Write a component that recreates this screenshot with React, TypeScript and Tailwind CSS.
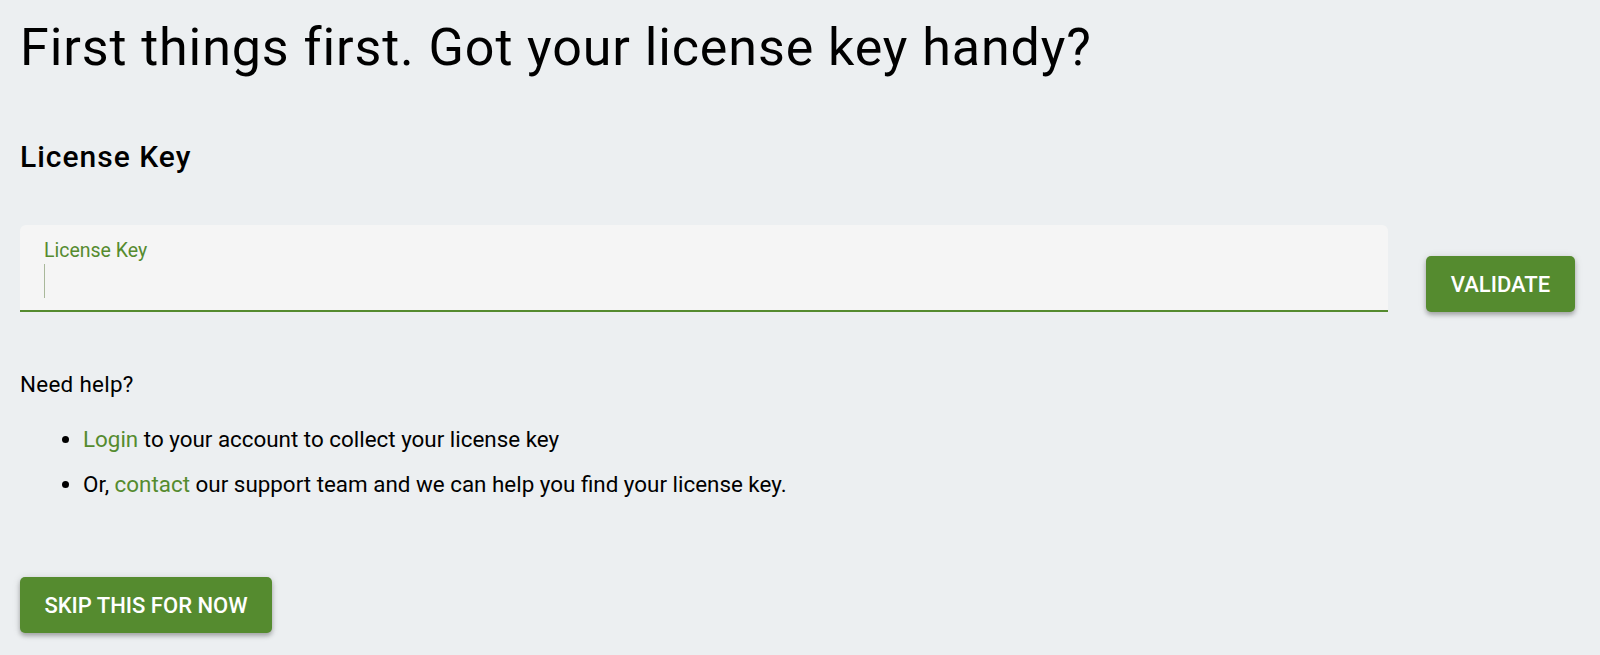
import React from "react";

export default function App() {
  return (
    <div
      className="min-h-[655px] w-full bg-[#eceff1] pl-[20px] pr-[25px] pt-[17px] text-black"
      style={{ fontFamily: "Roboto, 'Liberation Sans', sans-serif" }}
    >
      <h1 className="text-[52px] font-normal leading-[61px] tracking-[0.9px]">
        First things first. Got your license key handy?
      </h1>
      <h2 className="mt-[62px] text-[30px] font-medium leading-[34px] tracking-[1px]">License Key</h2>

      <div className="mt-[51px] flex items-end gap-[38px]">
        <div className="flex h-[87px] flex-1 flex-col rounded-t-[6px] border-b-2 border-[#558b2f] bg-[#f5f5f5] pl-[24px] pt-[14px]">
          <span className="text-[19.5px] leading-[23px] text-[#558b2f]">License Key</span>
          <span className="mt-[2px] block h-[34px] w-px bg-[#a9b89a]" />
        </div>
        <button className="h-[56px] w-[149px] rounded-[5px] bg-[#558b2f] text-[22px] font-medium uppercase text-white shadow-[0_3px_4px_rgba(0,0,0,0.25),0_1px_8px_rgba(0,0,0,0.12)]">
          Validate
        </button>
      </div>

      <p className="mt-[59px] text-[22.4px] leading-[26px] tracking-[0.3px]">Need help?</p>
      <ul className="mt-[29px] flex list-disc flex-col gap-[19px] pl-[63px] text-[22.4px] leading-[26px]">
        <li>
          <a className="text-[#558b2f]">Login</a> to your account to collect your license key
        </li>
        <li>
          Or, <a className="text-[#558b2f]">contact</a> our support team and we can help you find your license key.
        </li>
      </ul>

      <button className="mt-[80px] h-[56px] w-[252px] rounded-[5px] bg-[#558b2f] text-[22px] font-medium uppercase text-white shadow-[0_3px_4px_rgba(0,0,0,0.25),0_1px_8px_rgba(0,0,0,0.12)]">
        Skip this for now
      </button>
    </div>
  );
}
